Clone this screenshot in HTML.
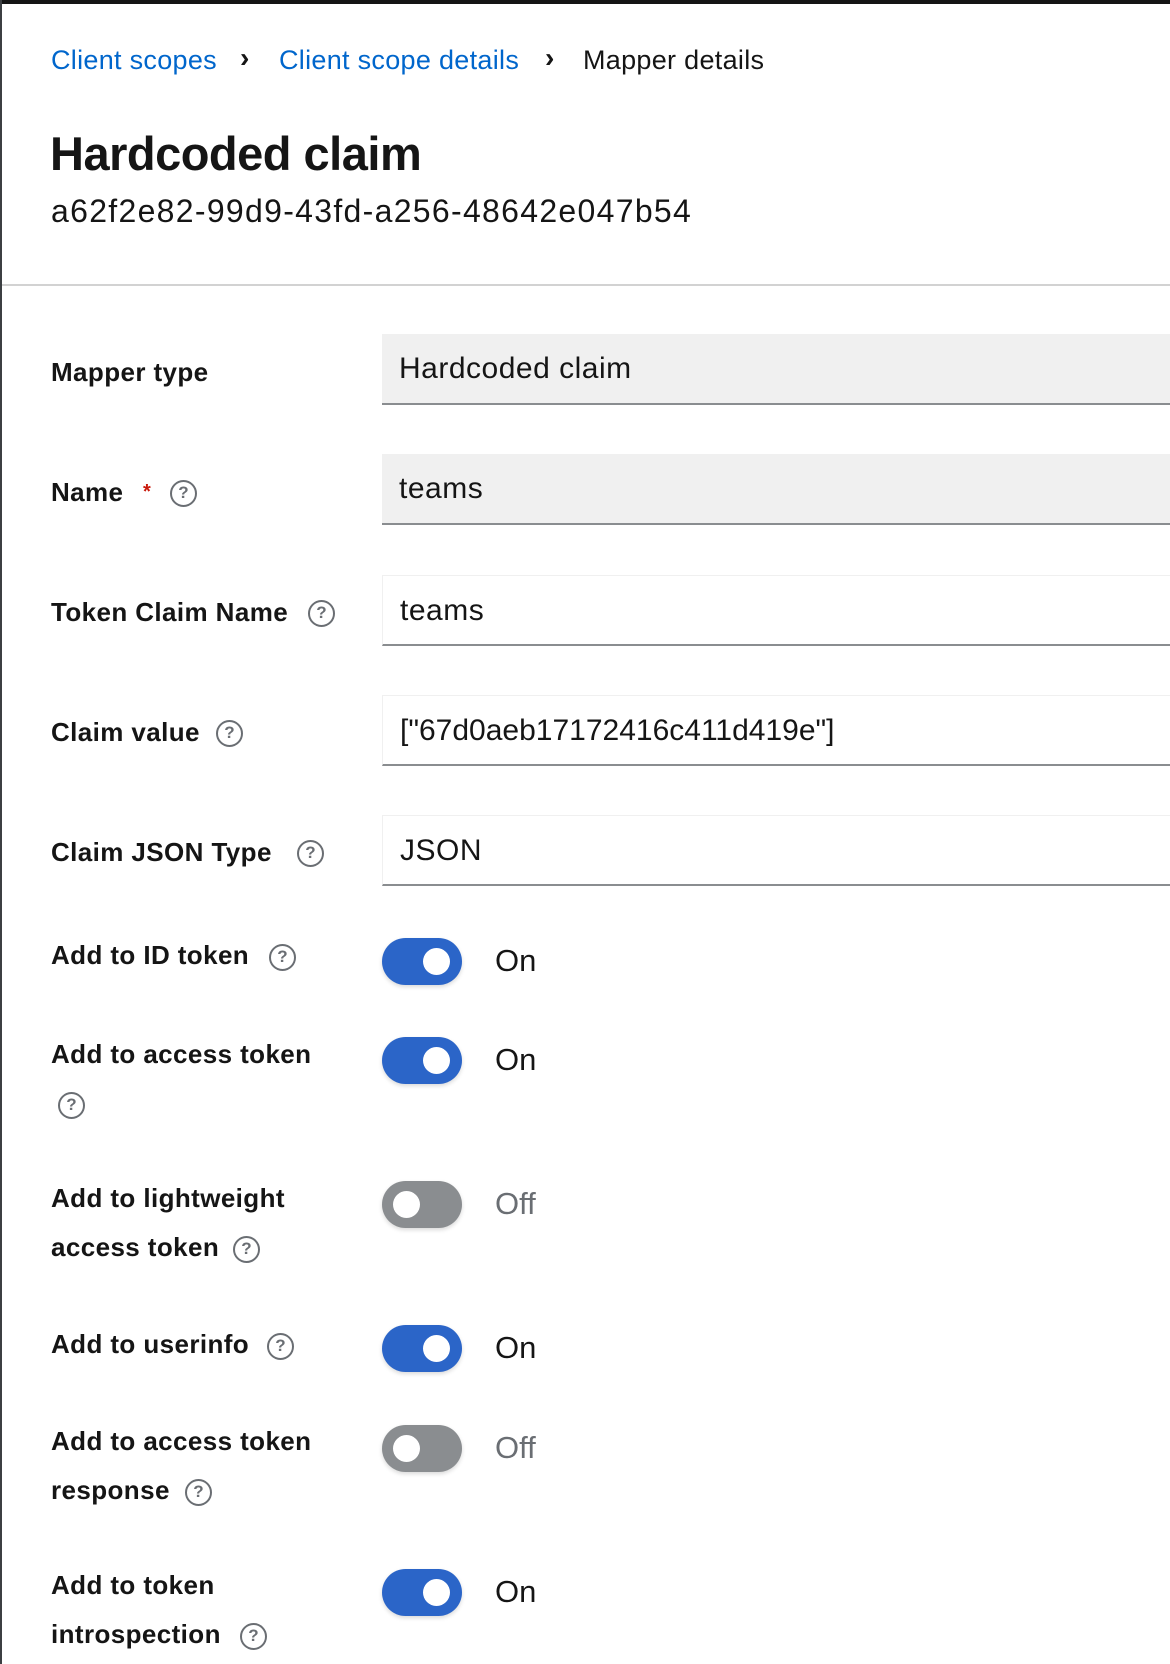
<!DOCTYPE html>
<html><head><meta charset="utf-8"><style>
*{margin:0;padding:0;box-sizing:border-box}
body{width:1170px;height:1664px;background:#fff;position:relative;overflow:hidden;font-family:"Liberation Sans",sans-serif;color:#151515}
.topbar{position:absolute;left:0;top:0;width:1170px;height:4px;background:#151515}
.lb{position:absolute;left:0;top:0;width:2px;height:1664px;background:#3c3f42}
.a{position:absolute;white-space:nowrap}
.bc{font-size:27px;top:45px;letter-spacing:0.3px}
.blue{color:#0066cc}
.chev{font-size:28px;font-weight:bold;top:42px}
.lbl{font-size:26px;font-weight:bold;line-height:30px;letter-spacing:0.4px}
.inp{position:absolute;left:382px;width:800px;height:71px;border-bottom:2px solid #8a8d90;font-size:30px;padding-left:17px;line-height:69px;letter-spacing:0.5px}
.ro{background:#f0f0f0}
.rw{background:#fff;border-top:1px solid #f0f0f0;border-left:1px solid #f0f0f0}
.help{position:absolute;width:27px;height:27px;border:2.5px solid #6a6e73;border-radius:50%;color:#6a6e73;font-size:17px;font-weight:bold;text-align:center;line-height:22px}
.tg{position:absolute;left:382px;width:80px;height:47px;border-radius:24px;background:#2b65c8;box-shadow:0 2px 4px rgba(0,0,0,.15)}
.tg::after{content:"";position:absolute;top:10px;left:41px;width:27px;height:27px;border-radius:50%;background:#fff}
.tg.off{background:#8a8d90}
.tg.off::after{left:11px}
.st{position:absolute;left:495px;font-size:31px}
.st.off{color:#6a6e73}
</style></head><body>
<div class="topbar"></div><div class="lb"></div>
<div class="a bc blue" style="left:51px">Client scopes</div>
<div class="a chev" style="left:240px">›</div>
<div class="a bc blue" style="left:279px">Client scope details</div>
<div class="a chev" style="left:545px">›</div>
<div class="a bc" style="left:583px">Mapper details</div>
<div class="a" style="left:50px;top:126px;font-size:47px;font-weight:bold;letter-spacing:-0.5px">Hardcoded claim</div>
<div class="a" style="left:51px;top:193px;font-size:32px;letter-spacing:1.3px">a62f2e82-99d9-43fd-a256-48642e047b54</div>
<div class="a" style="left:2px;top:284px;width:1168px;height:2px;background:#d2d2d2"></div>

<div class="a lbl" style="left:51px;top:357px">Mapper type</div>
<div class="inp ro" style="top:334px">Hardcoded claim</div>

<div class="a lbl" style="left:51px;top:477px">Name <span style="color:#c9190b;font-size:20px;vertical-align:top;margin-left:12px">*</span></div>
<div class="help" style="left:170px;top:480px">?</div>
<div class="inp ro" style="top:454px">teams</div>

<div class="a lbl" style="left:51px;top:597px">Token Claim Name</div>
<div class="help" style="left:308px;top:600px">?</div>
<div class="inp rw" style="top:575px">teams</div>

<div class="a lbl" style="left:51px;top:717px">Claim value</div>
<div class="help" style="left:216px;top:720px">?</div>
<div class="inp rw" style="top:695px;letter-spacing:0">["67d0aeb17172416c411d419e"]</div>

<div class="a lbl" style="left:51px;top:837px">Claim JSON Type</div>
<div class="help" style="left:297px;top:840px">?</div>
<div class="inp rw" style="top:815px">JSON</div>

<div class="a lbl" style="left:51px;top:940px">Add to ID token</div>
<div class="help" style="left:269px;top:944px">?</div>
<div class="tg" style="top:938px"></div><div class="st" style="top:943px">On</div>

<div class="a lbl" style="left:51px;top:1039px">Add to access token</div>
<div class="help" style="left:58px;top:1092px">?</div>
<div class="tg" style="top:1037px"></div><div class="st" style="top:1042px">On</div>

<div class="a lbl" style="left:51px;top:1183px">Add to lightweight</div>
<div class="a lbl" style="left:51px;top:1232px">access token</div>
<div class="help" style="left:233px;top:1236px">?</div>
<div class="tg off" style="top:1181px"></div><div class="st off" style="top:1186px">Off</div>

<div class="a lbl" style="left:51px;top:1329px">Add to userinfo</div>
<div class="help" style="left:267px;top:1333px">?</div>
<div class="tg" style="top:1325px"></div><div class="st" style="top:1330px">On</div>

<div class="a lbl" style="left:51px;top:1426px">Add to access token</div>
<div class="a lbl" style="left:51px;top:1475px">response</div>
<div class="help" style="left:185px;top:1479px">?</div>
<div class="tg off" style="top:1425px"></div><div class="st off" style="top:1430px">Off</div>

<div class="a lbl" style="left:51px;top:1570px">Add to token</div>
<div class="a lbl" style="left:51px;top:1619px">introspection</div>
<div class="help" style="left:240px;top:1623px">?</div>
<div class="tg" style="top:1569px"></div><div class="st" style="top:1574px">On</div>
</body></html>
